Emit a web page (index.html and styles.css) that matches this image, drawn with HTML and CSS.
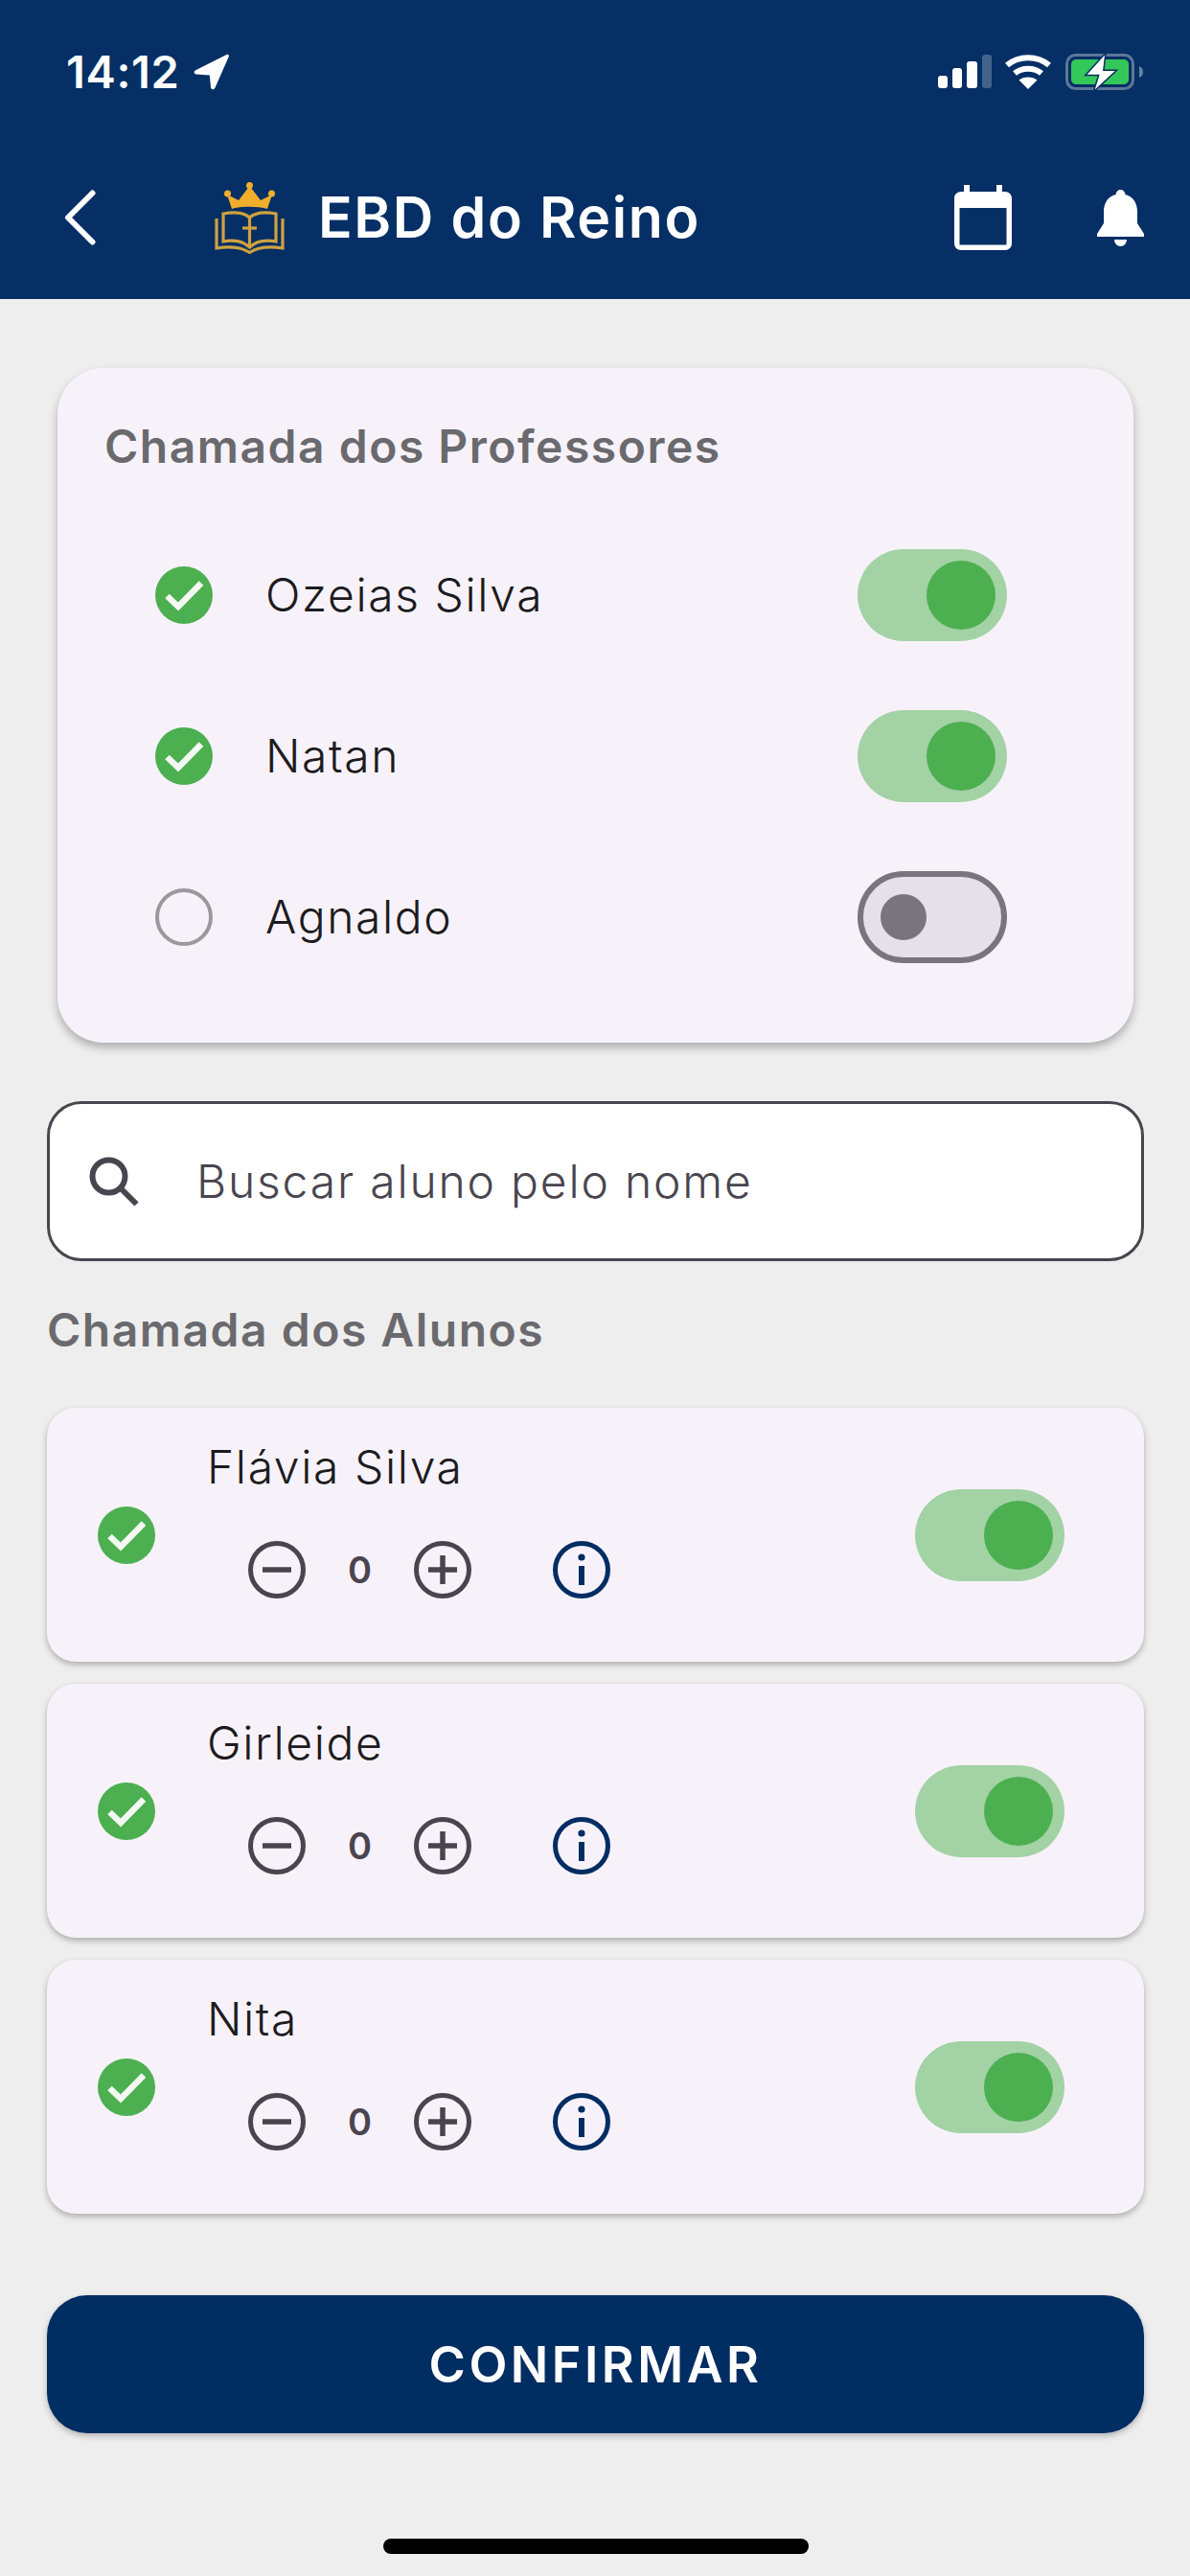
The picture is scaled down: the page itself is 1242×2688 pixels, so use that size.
FILE: index.html
```html
<!DOCTYPE html>
<html lang="pt-BR">
<head>
<meta charset="utf-8">
<title>EBD do Reino</title>
<link rel="stylesheet" href="styles.css">
</head>
<body>
<svg class="defs" width="0" height="0" aria-hidden="true">
  <symbol id="i-check" viewBox="0 0 60 60">
    <circle cx="30" cy="30" r="30" fill="#4CAF50"/>
    <path d="M12.500 31 L24 42 L48 17.500" fill="none" stroke="#F4F8F2" stroke-width="6.500"/>
  </symbol>
  <symbol id="i-minus" viewBox="0 0 60 60">
    <circle cx="30" cy="30" r="27.500" fill="none" stroke="#49454F" stroke-width="5"/>
    <path d="M15 30H45" stroke="#49454F" stroke-width="5.500"/>
  </symbol>
  <symbol id="i-plus" viewBox="0 0 60 60">
    <circle cx="30" cy="30" r="27.500" fill="none" stroke="#49454F" stroke-width="5"/>
    <path d="M15 30H45M30 15V45" stroke="#49454F" stroke-width="5.500"/>
  </symbol>
  <symbol id="i-info" viewBox="0 0 60 60">
    <circle cx="30" cy="30" r="27.500" fill="none" stroke="#002D62" stroke-width="5"/>
    <path d="M30 26V46" stroke="#002D62" stroke-width="6"/>
    <circle cx="30" cy="17" r="3.600" fill="#002D62"/>
  </symbol>
</svg>

<div class="screen">
  <header class="topbar">
    <div class="status">
      <div class="status-left">
        <span class="time">14:12</span>
        <svg class="loc" viewBox="0 0 37 38"><path d="M34.500 1 C36.300 .4 37.300 1.500 36.700 3.200 L22.500 35.500 C21.400 38 18.300 37.800 18 35 L16.800 22.500 L3 21.500 C.2 21 -.2 18.300 2.200 17.200Z" fill="#fff"/></svg>
      </div>
      <div class="status-right">
        <svg class="signal" viewBox="0 0 56 35">
          <rect x="0" y="22" width="10" height="13" rx="3" fill="#fff"/>
          <rect x="15" y="14" width="10" height="21" rx="3" fill="#fff"/>
          <rect x="30" y="7" width="11" height="28" rx="3" fill="#fff"/>
          <rect x="46" y="0" width="10" height="35" rx="3" fill="#fff" opacity=".25"/>
        </svg>
        <svg class="wifi" viewBox="0 0 48 37">
          <path d="M2 12 C14 1.500 34 1.500 46 12" fill="none" stroke="#fff" stroke-width="6"/>
          <path d="M10 20.500 C17.500 14 30.500 14 38 20.500" fill="none" stroke="#fff" stroke-width="6"/>
          <path d="M24 37 L14.500 27.500 C19.500 23.500 28.500 23.500 33.500 27.500Z" fill="#fff"/>
        </svg>
        <svg class="battery" viewBox="0 0 81 38">
          <rect x="1.500" y="1.500" width="69" height="35" rx="9" fill="none" stroke="#fff" stroke-opacity=".35" stroke-width="3"/>
          <rect x="6" y="6" width="60" height="26" rx="5" fill="#34C759"/>
          <path d="M77 13 C80 14 81 16.500 81 19 C81 21.500 80 24 77 25Z" fill="#fff" opacity=".4"/>
          <path d="M41 1.500 L22.500 21.700 H35.700 L30.700 37.500 L51.700 18 H39Z" fill="#fff" stroke="#052F65" stroke-width="3" paint-order="stroke"/>
        </svg>
      </div>
    </div>
    <div class="appbar">
      <svg class="back" viewBox="0 0 33 58"><path d="M29.500 3.500 L4 29 L29.500 54.500" fill="none" stroke="#fff" stroke-width="6" stroke-linecap="round" stroke-linejoin="round"/></svg>
      <svg class="logo" viewBox="0 0 73 75">
        <path d="M18 28 L13 13 L25 19 L36.500 4 L48 19 L60 13 L55 28 C45 25 28 25 18 28Z" fill="#F0AE2C"/>
        <circle cx="36.500" cy="3.500" r="3.500" fill="#F0AE2C"/>
        <circle cx="13.500" cy="12" r="3.500" fill="#F0AE2C"/>
        <circle cx="59.500" cy="12" r="3.500" fill="#F0AE2C"/>
        <g fill="none" stroke="#CFA23F" stroke-width="3.200">
          <path d="M9 33 V62 C20 60 30 62 36.500 68 C43 62 53 60 64 62 V33 C53 31 43 31 36.500 37 C30 31 20 31 9 33Z"/>
          <path d="M36.500 37 V68"/>
          <path d="M29 48 H44"/>
          <path d="M2 38 V69 C15 67 28 68 36.500 73.500 C45 68 58 67 71 69 V38"/>
        </g>
      </svg>
      <h1 class="brand">EBD do Reino</h1>
      <svg class="calendar" viewBox="0 0 60 68">
        <path d="M10 0H16V7H44V0H50V7H53C57 7 60 10 60 14V61C60 65 57 68 53 68H7C3 68 0 65 0 61V14C0 10 3 7 7 7H10Z" fill="#fff"/>
        <rect x="5.500" y="24" width="49" height="38.500" fill="#052F65"/>
      </svg>
      <svg class="bell" viewBox="0 0 49 59">
        <path d="M24.500 0 C27.500 0 29 2 29.500 5 C38 7 42 14 42 23 V35 L49 46 V49 H0 V46 L7 35 V23 C7 14 11 7 19.500 5 C20 2 21.500 0 24.500 0Z" fill="#fff"/>
        <path d="M18 52 H31 C31 56 28 59 24.500 59 C21 59 18 56 18 52Z" fill="#fff"/>
      </svg>
    </div>
  </header>

  <main class="content">
    <section class="teachers">
      <h2 class="section-title">Chamada dos Professores</h2>
      <div class="teacher-list">
        <div class="teacher">
          <svg class="mark"><use href="#i-check"/></svg>
          <span class="person">Ozeias Silva</span>
          <span class="switch on"><i class="thumb"></i></span>
        </div>
        <div class="teacher">
          <svg class="mark"><use href="#i-check"/></svg>
          <span class="person">Natan</span>
          <span class="switch on"><i class="thumb"></i></span>
        </div>
        <div class="teacher">
          <span class="mark-off"></span>
          <span class="person">Agnaldo</span>
          <span class="switch off"><i class="thumb"></i></span>
        </div>
      </div>
    </section>

    <div class="search">
      <svg class="search-icon" viewBox="0 0 52 52">
        <circle cx="20.500" cy="20.500" r="17" fill="none" stroke="#49454F" stroke-width="6"/>
        <path d="M33 33 L49.500 49.500" stroke="#49454F" stroke-width="6"/>
      </svg>
      <span class="placeholder">Buscar aluno pelo nome</span>
    </div>

    <h2 class="section-title students-title">Chamada dos Alunos</h2>

    <div class="students">
      <article class="student">
        <svg class="mark"><use href="#i-check"/></svg>
        <div class="student-body">
          <span class="person">Flávia Silva</span>
          <div class="counter">
            <svg class="round"><use href="#i-minus"/></svg>
            <span class="count">0</span>
            <svg class="round"><use href="#i-plus"/></svg>
            <svg class="round info"><use href="#i-info"/></svg>
          </div>
        </div>
        <span class="switch on"><i class="thumb"></i></span>
      </article>
      <article class="student">
        <svg class="mark"><use href="#i-check"/></svg>
        <div class="student-body">
          <span class="person">Girleide</span>
          <div class="counter">
            <svg class="round"><use href="#i-minus"/></svg>
            <span class="count">0</span>
            <svg class="round"><use href="#i-plus"/></svg>
            <svg class="round info"><use href="#i-info"/></svg>
          </div>
        </div>
        <span class="switch on"><i class="thumb"></i></span>
      </article>
      <article class="student">
        <svg class="mark"><use href="#i-check"/></svg>
        <div class="student-body">
          <span class="person">Nita</span>
          <div class="counter">
            <svg class="round"><use href="#i-minus"/></svg>
            <span class="count">0</span>
            <svg class="round"><use href="#i-plus"/></svg>
            <svg class="round info"><use href="#i-info"/></svg>
          </div>
        </div>
        <span class="switch on"><i class="thumb"></i></span>
      </article>
    </div>

    <button class="confirm">CONFIRMAR</button>
    <div class="home-bar"></div>
  </main>
</div>
</body>
</html>
```
FILE: styles.css
```css
* { box-sizing: border-box; }
html, body { margin: 0; padding: 0; }
body {
  width: 1242px;
  height: 2688px;
  overflow: hidden;
  background: #EEEEEE;
  font-family: Inter, "Liberation Sans", sans-serif;
}
.defs { position: absolute; }
.screen { display: flex; flex-direction: column; height: 2688px; }

/* top bar */
.topbar { height: 312px; background: #052F65; color: #fff; display: flex; flex-direction: column; }
.status {
  height: 55px;
  margin-top: 47px;
  padding: 0 49px 0 69px;
  display: flex;
  align-items: center;
  justify-content: space-between;
}
.status-left { display: flex; align-items: center; gap: 15px; }
.time { font-size: 47px; font-weight: 600; letter-spacing: .6px; line-height: 55px; }
.loc { width: 37px; height: 38px; }
.status-right { display: flex; align-items: center; }
.signal { width: 56px; height: 35px; margin-right: 14px; }
.wifi { width: 48px; height: 37px; margin-right: 15px; }
.battery { width: 81px; height: 38px; }

.appbar {
  margin-top: 87px;
  height: 76px;
  padding: 0 48px 0 67px;
  display: flex;
  align-items: center;
}
.back { width: 33px; height: 58px; margin-right: 124px; }
.logo { width: 73px; height: 75px; margin-right: 35px; }
.brand { margin: 0; font-size: 59px; font-weight: 600; line-height: 76px; letter-spacing: 1.6px; flex: 1; }
.calendar { width: 60px; height: 68px; margin-right: 89px; }
.bell { width: 49px; height: 59px; }

/* content */
.content { padding: 72px 48px 0 49px; display: flex; flex-direction: column; }
.section-title { margin: 0; font-size: 48px; line-height: 60px; font-weight: 600; color: #6A6A6E; letter-spacing: 1.5px; }

.person { font-size: 48px; line-height: 60px; font-weight: 300; color: #1D1B20; letter-spacing: 1.6px; }

.teachers {
  margin: 0 11px 0 11px;
  height: 704px;
  padding: 52px 0 0 49px;
  background: #F7F2FA;
  border-radius: 48px;
  box-shadow: 0 5px 10px rgba(0, 0, 0, .28);
}
.teacher-list { margin-top: 77px; display: flex; flex-direction: column; gap: 72px; }
.teacher { display: flex; align-items: center; height: 96px; padding: 0 132px 0 53px; }
.teacher .person { margin-left: 55px; }
.teacher .switch { margin-left: auto; }
.mark { width: 60px; height: 60px; flex: none; }
.mark-off { width: 60px; height: 60px; flex: none; border: 4px solid #9A979F; border-radius: 50%; }

.switch {
  flex: none;
  width: 156px;
  height: 96px;
  border-radius: 48px;
  display: flex;
  align-items: center;
}
.switch.on { background: #A3D2A5; justify-content: flex-end; padding-right: 12px; }
.switch.on .thumb { width: 72px; height: 72px; background: #4CAF50; border-radius: 50%; }
.switch.off { background: #E6E0E9; border: 6px solid #79747E; padding-left: 18px; }
.switch.off .thumb { width: 48px; height: 48px; background: #79747E; border-radius: 50%; }

.search {
  margin-top: 61px;
  height: 167px;
  display: flex;
  align-items: center;
  padding-left: 41px;
  background: #fff;
  border: 3px solid #49454F;
  border-radius: 36px;
}
.search-icon { width: 52px; height: 52px; }
.placeholder { margin-left: 60px; font-size: 48px; line-height: 60px; font-weight: 300; color: #49454F; letter-spacing: 1.8px; }

.students-title { margin-top: 42px; }

.students { margin-top: 51px; display: flex; flex-direction: column; gap: 23px; }
.student {
  height: 265px;
  padding: 0 83px 0 53px;
  background: #F7F2FA;
  border-radius: 30px;
  box-shadow: 0 3px 6px rgba(0, 0, 0, .28);
  display: flex;
  align-items: center;
}
.student-body { margin-left: 54px; align-self: flex-start; padding-top: 32px; display: flex; flex-direction: column; }
.student .switch { margin-left: auto; }
.counter { margin: 47px 0 0 43px; display: flex; align-items: center; }
.round { width: 60px; height: 60px; flex: none; }
.count { width: 113px; text-align: center; font-size: 38px; line-height: 60px; font-weight: 600; color: #49454F; }
.info { margin-left: 85px; }

.confirm {
  margin-top: 85px;
  height: 144px;
  border: 0;
  border-radius: 42px;
  background: #002D62;
  color: #fff;
  font-family: inherit;
  font-size: 52px;
  font-weight: 600;
  letter-spacing: 3.500px;
  box-shadow: 0 3px 6px rgba(0, 0, 0, .25);
}
.home-bar { margin: 110px auto 0; width: 444px; height: 16px; border-radius: 8px; background: #000; }
```
